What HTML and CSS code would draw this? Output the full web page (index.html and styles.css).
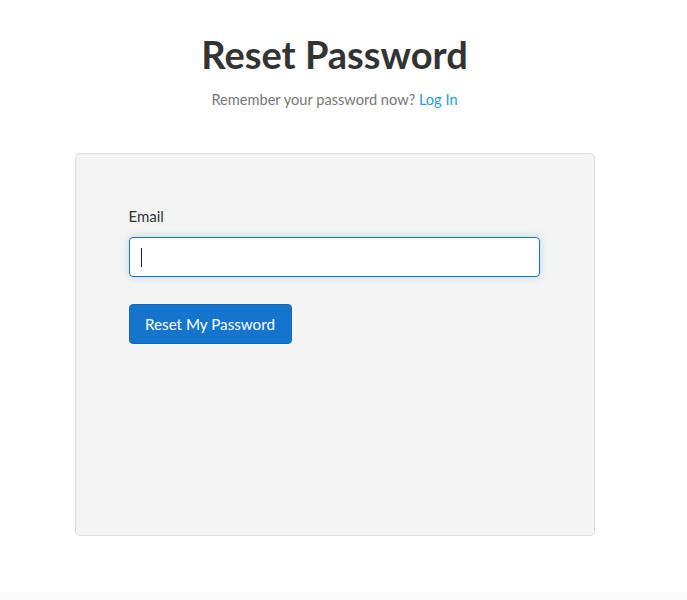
FILE: index.html
```html
<!DOCTYPE html>
<html lang="en">
<head>
<meta charset="utf-8">
<title>Reset Password</title>
<link rel="stylesheet" href="styles.css">
</head>
<body>
<div class="page">
  <header class="head">
    <h1 class="title">Reset Password</h1>
    <p class="sub">Remember your password now? <a class="link" href="#">Log In</a></p>
  </header>
  <form class="card">
    <label class="label" for="email">Email</label>
    <div class="field"><span class="caret"></span></div>
    <button class="btn" type="button">Reset My Password</button>
  </form>
</div>
<div class="foot"></div>
</body>
</html>
```
FILE: styles.css
```css
html, body {
  margin: 0;
  padding: 0;
  background: #fff;
  font-family: Lato, "Liberation Sans", sans-serif;
  color: #333;
}
.page {
  width: 669px;
  height: 592px;
  display: flex;
  flex-direction: column;
  align-items: center;
}
.head {
  display: flex;
  flex-direction: column;
  align-items: center;
}
.title {
  margin: 31px 0 0;
  font-size: 38px;
  line-height: 46px;
  font-weight: 700;
  color: #333;
}
.sub {
  margin: 13px 0 0;
  font-size: 14.6px;
  line-height: 20px;
  color: #777;
}
.link {
  color: #2a9bd6;
  text-decoration: none;
}
.card {
  box-sizing: border-box;
  margin-top: 43px;
  width: 520px;
  height: 383px;
  background: #f4f4f4;
  border: 1px solid #dcdcdc;
  border-radius: 5px;
  padding: 52px 53px 0;
  display: flex;
  flex-direction: column;
  align-items: flex-start;
}
.label {
  font-size: 15px;
  line-height: 20px;
  color: #333;
}
.field {
  box-sizing: border-box;
  margin-top: 11px;
  width: 411px;
  height: 40px;
  background: #fff;
  border: 1px solid #1a6fc4;
  border-radius: 4px;
  box-shadow: 0 0 8px rgba(100, 160, 220, 0.35);
  display: flex;
  align-items: center;
  padding-left: 11px;
}
.caret {
  width: 1px;
  height: 19px;
  background: #222;
}
.btn {
  margin-top: 27px;
  width: 163px;
  height: 40px;
  background: #1574cc;
  color: #fff;
  border: 1px solid #1068bd;
  border-radius: 4px;
  font-family: Lato, "Liberation Sans", sans-serif;
  font-size: 15.2px;
  padding: 0;
}
.foot {
  height: 8px;
  background: #fbfbfb;
}
```
